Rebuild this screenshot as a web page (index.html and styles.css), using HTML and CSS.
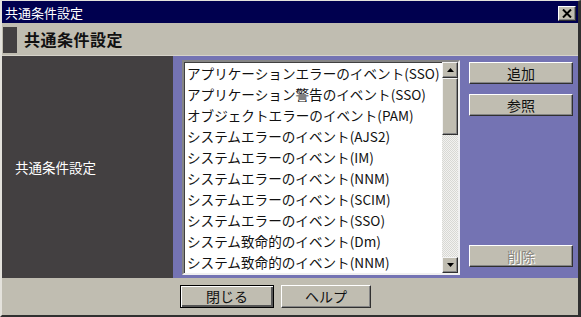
FILE: index.html
```html
<!DOCTYPE html>
<html lang="ja">
<head>
    <meta charset="UTF-8">
    <title>共通条件設定</title>
    <link rel="stylesheet" href="styles.css">
</head>
<body>
    <div class="window">
        <div class="titlebar">
            <span class="title">共通条件設定</span>
            <button class="close" type="button">
                <svg width="10" height="9" viewBox="0 0 10 9"><path d="M1 0.5 L9 8.5 M9 0.5 L1 8.5" stroke="#000" stroke-width="2"/></svg>
            </button>
        </div>
        <div class="header">
            <span class="mark"></span>
            <h1>共通条件設定</h1>
        </div>
        <div class="main">
            <div class="side">共通条件設定</div>
            <div class="panel">
                <div class="listbox">
                    <ul class="items">
                        <li>アプリケーションエラーのイベント(SSO)</li>
                        <li>アプリケーション警告のイベント(SSO)</li>
                        <li>オブジェクトエラーのイベント(PAM)</li>
                        <li>システムエラーのイベント(AJS2)</li>
                        <li>システムエラーのイベント(IM)</li>
                        <li>システムエラーのイベント(NNM)</li>
                        <li>システムエラーのイベント(SCIM)</li>
                        <li>システムエラーのイベント(SSO)</li>
                        <li>システム致命的のイベント(Dm)</li>
                        <li>システム致命的のイベント(NNM)</li>
                    </ul>
                    <div class="scrollbar">
                        <div class="arrow">
                            <svg width="7" height="4" viewBox="0 0 7 4"><path d="M3.5 0 L7 4 L0 4 Z" fill="#000"/></svg>
                        </div>
                        <div class="thumb"></div>
                        <div class="track"></div>
                        <div class="arrow">
                            <svg width="7" height="4" viewBox="0 0 7 4"><path d="M0 0 L7 0 L3.5 4 Z" fill="#000"/></svg>
                        </div>
                    </div>
                </div>
                <div class="actions">
                    <button class="btn" type="button">追加</button>
                    <button class="btn" type="button">参照</button>
                    <div class="spacer"></div>
                    <button class="btn" type="button" disabled>削除</button>
                </div>
            </div>
        </div>
        <div class="footer">
            <button class="btn default" type="button">閉じる</button>
            <button class="btn" type="button">ヘルプ</button>
        </div>
    </div>
</body>
</html>
```

FILE: styles.css
```css
* { box-sizing: border-box; }
body { margin: 0; background: #c0bdb1; font-family: "Noto Sans CJK JP", "Noto Sans", sans-serif; font-size: 13px; }
.window { width: 581px; height: 317px; display: flex; flex-direction: column; background: #c0bdb1; border-style: solid; border-width: 1px 3px 2px 2px; border-color: #e4e2dc #303030 #303030 #e4e2dc; }
.titlebar { height: 22px; background: #00004f; color: #fff; display: flex; align-items: center; justify-content: space-between; padding: 0 2px 0 3px; }
.title { font-size: 13px; line-height: 1; }
.close { width: 18px; height: 15px; padding: 0; margin-top: 2px; background: #c0bdb1; border: 1px solid; border-color: #fff #303030 #303030 #fff; box-shadow: inset -1px -1px #858585; display: flex; align-items: center; justify-content: center; }
.header { height: 33px; display: flex; align-items: center; gap: 7px; padding-left: 1px; border-bottom: 1px solid #d6d3ca; }
.mark { width: 14px; height: 26px; background: #434041; margin-top: 1px; }
.header h1 { margin: 0; font-size: 16px; font-weight: bold; letter-spacing: 0.5px; color: #111; }
.main { height: 222px; display: flex; }
.side { width: 171px; background: #434041; color: #fff; display: flex; align-items: center; padding-left: 13px; font-size: 13.5px; }
.panel { flex: 1; background: #7473b3; display: flex; padding: 4px 5px 3px 9px; }
.listbox { width: 278px; display: flex; background: #fff; border: 2px solid; border-color: #858585 #f0f0f0 #f0f0f0 #858585; box-shadow: inset 1px 1px #404040; }
.items { flex: 1; list-style: none; margin: 0; padding: 1px 0 0 3px; overflow: hidden; }
.items li { height: 21px; line-height: 21px; white-space: nowrap; font-size: 13.6px; color: #111; }
.scrollbar { width: 16px; display: flex; flex-direction: column; }
.arrow { height: 16px; background: #c0bdb1; border: 1px solid; border-color: #f4f4f4 #303030 #303030 #f4f4f4; box-shadow: inset -1px -1px #858585; display: flex; align-items: center; justify-content: center; }
.thumb { height: 57px; background: #c0bdb1; border: 1px solid; border-color: #f4f4f4 #303030 #303030 #f4f4f4; box-shadow: inset -1px -1px #858585; }
.track { flex: 1; background-color: #f2f2f0; background-image: repeating-conic-gradient(#d8d8d4 0 25%, #f2f2f0 0 50%); background-size: 2px 2px; }
.actions { flex: 1; display: flex; flex-direction: column; gap: 10px; padding: 2px 0 8px 9px; }
.spacer { flex: 1; }
.btn { height: 22px; background: #c0bdb1; border: 1px solid; border-color: #fff #303030 #303030 #fff; box-shadow: inset -1px -1px #858585; font-family: inherit; font-size: 14px; color: #111; padding: 0; }
.btn:disabled { color: #8a8880; text-shadow: 1px 1px #fff; }
.footer { flex: 1; display: flex; align-items: center; gap: 7px; padding: 0 0 1px 178px; }
.footer .btn { width: 94px; height: 23px; }
.footer .default { border-color: #000; box-shadow: inset 1px 1px #fff, inset -2px -2px #555; }
.footer .btn + .btn { width: 90px; }
```
